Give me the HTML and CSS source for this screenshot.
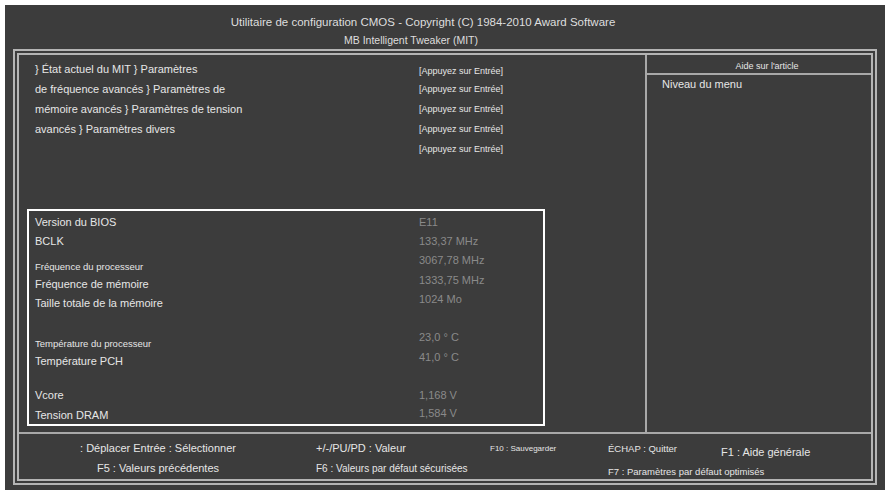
FILE: index.html
```html
<!DOCTYPE html>
<html lang="fr">
<head>
    <meta charset="UTF-8">
    <meta name="viewport" content="width=device-width, initial-scale=1.0">
    <title>MB Intelligent Tweaker (MIT)</title>
    <link rel="stylesheet" href="styles.css">
</head>
<body>

<div class="screen">
    <div class="header">
        <div class="title">Utilitaire de configuration CMOS - Copyright (C) 1984-2010 Award Software</div>
        <div class="subtitle">MB Intelligent Tweaker (MIT)</div>
    </div>

    <div class="frame">
        <div class="main">
            <div class="left">
                <div class="menu">
                    <div class="menu-row"><span class="menu-label">} État actuel du MIT } Paramètres</span><span class="enter first">[Appuyez sur Entrée]</span></div>
                    <div class="menu-row"><span class="menu-label">de fréquence avancés } Paramètres de</span><span class="enter">[Appuyez sur Entrée]</span></div>
                    <div class="menu-row"><span class="menu-label">mémoire avancés } Paramètres de tension</span><span class="enter">[Appuyez sur Entrée]</span></div>
                    <div class="menu-row"><span class="menu-label">avancés } Paramètres divers</span><span class="enter">[Appuyez sur Entrée]</span></div>
                    <div class="menu-row"><span class="menu-label"></span><span class="enter">[Appuyez sur Entrée]</span></div>
                </div>

                <div class="info">
                    <div class="info-row"><span class="label">Version du BIOS</span><span class="value">E11</span></div>
                    <div class="info-row"><span class="label">BCLK</span><span class="value">133,37 MHz</span></div>
                    <div class="info-row"><span class="label small">Fréquence du processeur</span><span class="value">3067,78 MHz</span></div>
                    <div class="info-row"><span class="label low">Fréquence de mémoire</span><span class="value">1333,75 MHz</span></div>
                    <div class="info-row"><span class="label low">Taille totale de la mémoire</span><span class="value">1024 Mo</span></div>
                    <div class="info-row"></div>
                    <div class="info-row"><span class="label small">Température du processeur</span><span class="value">23,0 ° C</span></div>
                    <div class="info-row"><span class="label low">Température PCH</span><span class="value">41,0 ° C</span></div>
                    <div class="info-row"></div>
                    <div class="info-row"><span class="label">Vcore</span><span class="value">1,168 V</span></div>
                    <div class="info-row"><span class="label">Tension DRAM</span><span class="value up">1,584 V</span></div>
                </div>
            </div>

            <div class="help">
                <div class="help-title">Aide sur l'article</div>
                <div class="help-text">Niveau du menu</div>
            </div>
        </div>

        <div class="footer">
            <span class="key move">: Déplacer Entrée : Sélectionner</span>
            <span class="key value-key">+/-/PU/PD : Valeur</span>
            <span class="key save">F10 : Sauvegarder</span>
            <span class="key quit">ÉCHAP : Quitter</span>
            <span class="key general">F1 : Aide générale</span>
            <span class="key prev">F5 : Valeurs précédentes</span>
            <span class="key safe">F6 : Valeurs par défaut sécurisées</span>
            <span class="key optimized">F7 : Paramètres par défaut optimisés</span>
        </div>
    </div>
</div>

</body>
</html>
```

FILE: styles.css
```css
body {
    margin: 0;
    background: #ffffff;
    font-family: "Liberation Sans", Arial, sans-serif;
}
.screen {
    margin: 5px 0 0 5px;
    width: 880px;
    height: 485px;
    background: #3c3c3c;
    color: #e6e6e6;
    overflow: hidden;
}
.header {
    height: 44px;
    padding-right: 44px;
    text-align: center;
    color: #dedede;
}
.title {
    padding-top: 9px;
    line-height: 16px;
    font-size: 11.5px;
}
.subtitle {
    padding-top: 2px;
    margin-right: 24px;
    line-height: 16px;
    font-size: 10.5px;
}
.frame {
    margin: 0 8px;
    height: 436px;
    box-sizing: border-box;
    border: 6px double #b4b4b4;
    display: flex;
    flex-direction: column;
}
.main {
    display: flex;
    height: 377px;
    border-bottom: 2px solid #a8a8a8;
}
.left {
    width: 626px;
    border-right: 2px solid #a8a8a8;
}
.menu {
    height: 154px;
    box-sizing: border-box;
    padding: 4px 0 0 16px;
}
.menu-row {
    display: flex;
    align-items: center;
    height: 20px;
}
.menu-label {
    width: 384px;
    font-size: 11px;
}
.enter {
    font-size: 9px;
}
.enter.first {
    position: relative;
    top: 2px;
}
.info {
    margin-left: 8px;
    width: 518px;
    box-sizing: border-box;
    border: 2px solid #ffffff;
    padding: 1px 0 0 6px;
}
.info-row {
    display: flex;
    align-items: center;
    height: 19.3px;
}
.label {
    width: 384px;
    font-size: 11px;
}
.label.low {
    position: relative;
    top: 4px;
}
.label.small {
    font-size: 9.5px;
    position: relative;
    top: 6px;
}
.value {
    font-size: 11px;
    color: #8a8a8a;
}
.value.up {
    position: relative;
    top: -2px;
}
.help {
    flex: 1;
}
.help-title {
    height: 18px;
    line-height: 22px;
    font-size: 9px;
    text-align: center;
    padding-left: 16px;
    border-bottom: 2px solid #a8a8a8;
}
.help-text {
    padding: 1px 0 0 15px;
    font-size: 11px;
    line-height: 16px;
}
.footer {
    flex: 1;
    display: grid;
    grid-template-columns: 278px 193px 118px 113px 1fr;
    grid-template-rows: 22px 18px;
    padding-top: 3px;
    align-items: center;
}
.key {
    font-size: 11px;
}
.move, .prev {
    text-align: center;
}
.value-key, .safe {
    padding-left: 19px;
}
.save {
    font-size: 8px;
}
.quit {
    font-size: 9.5px;
}
.general {
    font-size: 11px;
    position: relative;
    top: 4px;
}
.safe {
    font-size: 10px;
}
.optimized {
    grid-column: 4 / span 2;
    font-size: 9.5px;
    position: relative;
    top: 3px;
}
```
